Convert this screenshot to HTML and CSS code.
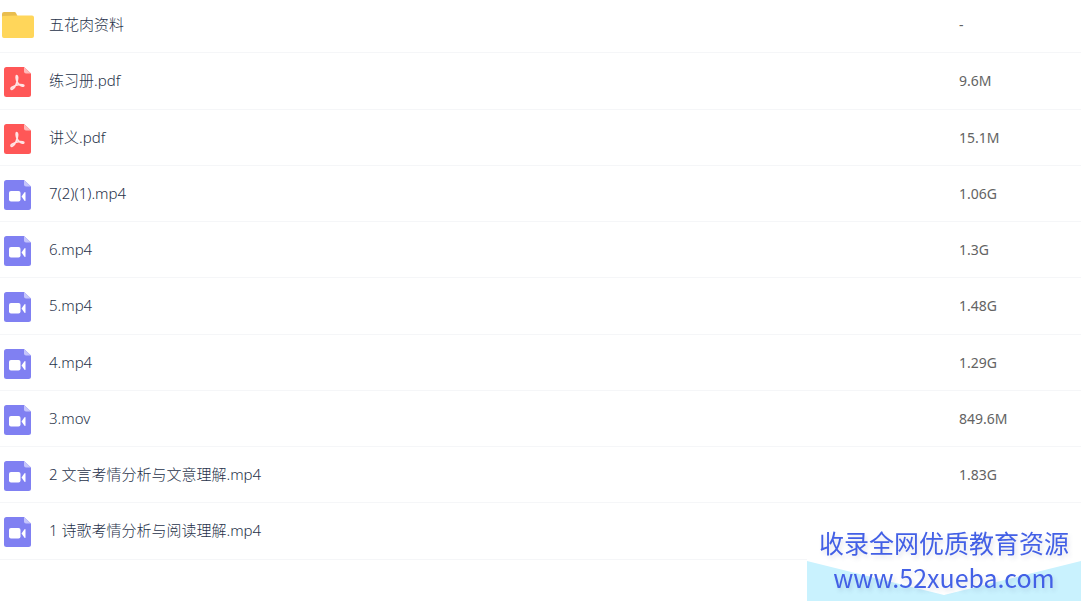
FILE: index.html
```
<!DOCTYPE html>
<html lang="zh-CN">
<head>
    <meta charset="utf-8">
    <title>文件列表</title>
    <link rel="stylesheet" href="styles.css">
</head>
<body>

<!-- 图标 -->
<svg class="sprite" aria-hidden="true">
    <symbol id="icon-folder" viewBox="0 0 32 28">
        <path fill="#e9bd4e" d="M2 1h10.500q1 0 1.500 1l1.500 3v6H0V3q0-2 2-2z"/>
        <path fill="#ffd65a" d="M0 6q0-1 1-1l14-.5H30q2 0 2 2V25q0 2-2 2H2q-2 0-2-2z"/>
    </symbol>
    <symbol id="icon-pdf" viewBox="0 0 27 30">
        <path fill="#ff5757" d="M2.500 0H20l7 6.500V27.500q0 2.500-2.500 2.500h-22Q0 30 0 27.500v-25Q0 0 2.500 0z"/>
        <path fill="#ffb9b9" d="M20 0l7 6.500h-5q-2 0-2-2z"/>
        <path fill="none" stroke="#ffe3e3" stroke-width="1.600" stroke-linecap="round" stroke-linejoin="round" d="M12.600 8.500c1.500 0 1.200 3 .6 5.500-.8 3.200-3 7.200-5 8.200-1.600.6-1.700-1-.2-2 2.700-1.800 7.500-3 10.600-2.500 2 .4 1.400 2-.3 1.500-2.600-.8-5-3.500-5.700-6-.5-1.700-.8-4.500 0-4.700z"/>
    </symbol>
    <symbol id="icon-video" viewBox="0 0 27 30">
        <path fill="#8080f2" d="M2.500 0H20l7 6.500V27.500q0 2.500-2.500 2.500h-22Q0 30 0 27.500v-25Q0 0 2.500 0z"/>
        <path fill="#c5c5fb" d="M20 0l7 6.500h-5q-2 0-2-2z"/>
        <rect fill="#fff" x="5" y="11" width="11.500" height="10.500" rx="2"/>
        <path fill="#fff" d="M17.500 16.500L20.500 12.300q1-.8 1 .4v7.600q0 1.200-1 .4z"/>
    </symbol>
</svg>

<table class="file-list">
    <tbody>
        <tr>
            <td class="name"><div class="file"><svg class="icon folder"><use href="#icon-folder"/></svg><span>五花肉资料</span></div></td>
            <td class="size">-</td>
        </tr>
        <tr>
            <td class="name"><div class="file"><svg class="icon"><use href="#icon-pdf"/></svg><span>练习册.pdf</span></div></td>
            <td class="size">9.6M</td>
        </tr>
        <tr>
            <td class="name"><div class="file"><svg class="icon"><use href="#icon-pdf"/></svg><span>讲义.pdf</span></div></td>
            <td class="size">15.1M</td>
        </tr>
        <tr>
            <td class="name"><div class="file"><svg class="icon"><use href="#icon-video"/></svg><span>7(2)(1).mp4</span></div></td>
            <td class="size">1.06G</td>
        </tr>
        <tr>
            <td class="name"><div class="file"><svg class="icon"><use href="#icon-video"/></svg><span>6.mp4</span></div></td>
            <td class="size">1.3G</td>
        </tr>
        <tr>
            <td class="name"><div class="file"><svg class="icon"><use href="#icon-video"/></svg><span>5.mp4</span></div></td>
            <td class="size">1.48G</td>
        </tr>
        <tr>
            <td class="name"><div class="file"><svg class="icon"><use href="#icon-video"/></svg><span>4.mp4</span></div></td>
            <td class="size">1.29G</td>
        </tr>
        <tr>
            <td class="name"><div class="file"><svg class="icon"><use href="#icon-video"/></svg><span>3.mov</span></div></td>
            <td class="size">849.6M</td>
        </tr>
        <tr>
            <td class="name"><div class="file"><svg class="icon"><use href="#icon-video"/></svg><span>2 文言考情分析与文意理解.mp4</span></div></td>
            <td class="size">1.83G</td>
        </tr>
        <tr>
            <td class="name"><div class="file"><svg class="icon"><use href="#icon-video"/></svg><span>1 诗歌考情分析与阅读理解.mp4</span></div></td>
            <td class="size"></td>
        </tr>
    </tbody>
</table>

<div class="watermark">
    <div class="slogan">收录全网优质教育资源</div>
    <div class="site">www.52xueba.com</div>
</div>

</body>
</html>
```
FILE: styles.css
```
body {
    margin: 0;
    background: #fff;
    font-family: "Noto Sans", "Noto Sans CJK SC", sans-serif;
    font-size: 15px;
    color: #27324a;
}
.sprite {
    position: absolute;
    width: 0;
    height: 0;
}

/* 文件列表 */
.file-list {
    width: 100%;
    border-collapse: separate;
    border-spacing: 0;
    table-layout: fixed;
}
.file-list td {
    box-sizing: border-box;
    height: 56px;
    padding: 0 0 1px;
    border-bottom: 1px solid #f5f6f8;
    vertical-align: middle;
}
.file-list tr:nth-child(4n+2) td {
    height: 57px;
}
.file-list tr:first-child td {
    height: 53px;
    padding-bottom: 3px;
}
.file {
    display: flex;
    align-items: center;
    line-height: 20px;
}
.file span {
    padding-bottom: 1px;
    font-weight: 300;
}
.icon {
    flex: none;
    width: 27px;
    height: 30px;
    margin: 3px 18px 0 4px;
}
.icon.folder {
    width: 32px;
    height: 28px;
    margin: 1px 15px 0 2px;
}
.file-list .size {
    width: 122px;
    padding-bottom: 0;
    font-size: 14px;
    line-height: 20px;
    color: #636363;
}

/* 右下角水印 */
.watermark {
    position: fixed;
    right: 0;
    bottom: 0;
    width: 274px;
    height: 76px;
    font-family: "Noto Sans CJK SC", sans-serif;
    font-size: 25px;
    font-weight: 400;
    line-height: 35px;
    text-align: center;
    color: #4360e6;
    text-shadow: 2px 3px 4px rgba(60, 70, 120, .15);
    background: #fff;
}
.watermark::before {
    content: "";
    position: absolute;
    left: 0;
    right: 0;
    bottom: 0;
    z-index: -1;
    height: 40px;
    background: #c9f2fe;
    clip-path: polygon(0 0, 50% 85%, 100% 0, 100% 100%, 0 100%);
}
```
